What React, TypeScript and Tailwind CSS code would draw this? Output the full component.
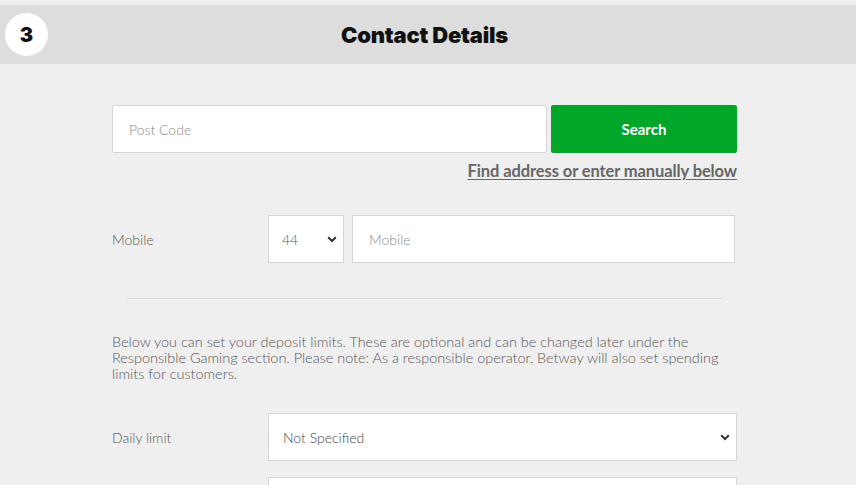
import React from "react";

function Chevron() {
  return (
    <svg width="10" height="7" viewBox="0 0 10 7" className="shrink-0">
      <path d="M1.2 1.2 L5 5 L8.8 1.2" fill="none" stroke="#333" strokeWidth="2" />
    </svg>
  );
}

export default function App() {
  return (
    <div className="w-[856px] h-[485px] overflow-hidden bg-[#efefef] pt-[5px]" style={{ fontFamily: "Lato, 'Open Sans', sans-serif" }}>
      <div className="relative h-[59px] bg-[#dddddd] flex items-center justify-center pr-[7px]">
        <div className="absolute left-[5px] top-[8px] w-[43px] h-[43px] rounded-full bg-white flex items-center justify-center text-[20px] font-black text-[#111]" style={{ fontFamily: "Inter, sans-serif" }}>
          3
        </div>
        <h1 className="text-[22px] font-black text-[#111] tracking-[-0.2px] pt-[2px]" style={{ fontFamily: "Inter, sans-serif" }}>
          Contact Details
        </h1>
      </div>

      <div className="ml-[112px] w-[625px]">
        <div className="pt-[41px] flex gap-[4px]">
          <div className="flex-1 h-[48px] bg-white border border-[#d4d4d4] rounded-[2px] flex items-center pl-[16px] text-[14px] text-[#8a8a8a] font-light">
            Post Code
          </div>
          <div className="w-[186px] h-[48px] bg-[#02a629] rounded-[2px] flex items-center justify-center text-white text-[15px] font-bold">
            Search
          </div>
        </div>
        <div className="mt-[7px] flex justify-end">
          <span className="text-[16.5px] leading-[22px] font-bold text-[#666] underline underline-offset-2 tracking-[-0.1px]">Find address or enter manually below</span>
        </div>

        <div className="mt-[33px] flex items-center h-[48px]">
          <div className="w-[156px] text-[14px] text-[#555] font-light">Mobile</div>
          <div className="w-[76px] h-[48px] bg-white border border-[#d4d4d4] flex items-center justify-between pl-[13px] pr-[6px] text-[14px] text-[#555] font-light">
            <span>44</span>
            <Chevron />
          </div>
          <div className="ml-[8px] w-[383px] h-[48px] bg-white border border-[#d4d4d4] flex items-center pl-[16px] text-[14px] text-[#8a8a8a] font-light">
            Mobile
          </div>
        </div>

        <div className="mt-[35px] mx-[15px] w-[595px] h-px bg-[#dcdcdc]" />

        <p className="mt-[35px] w-[625px] text-[14.45px] leading-[16px] text-[#555] font-light">
          Below you can set your deposit limits. These are optional and can be changed later under the Responsible Gaming section. Please note: As a responsible operator, Betway will also set spending limits for customers.
        </p>

        <div className="mt-[31px] flex items-center h-[48px]">
          <div className="w-[156px] text-[14px] text-[#555] font-light">Daily limit</div>
          <div className="w-[469px] h-[48px] bg-white border border-[#d4d4d4] flex items-center justify-between pl-[14px] pr-[6px] text-[14px] text-[#444] font-light">
            <span>Not Specified</span>
            <Chevron />
          </div>
        </div>

        <div className="mt-[16px] flex">
          <div className="w-[156px]" />
          <div className="w-[469px] h-[48px] bg-white border border-[#d4d4d4]" />
        </div>
      </div>
    </div>
  );
}
